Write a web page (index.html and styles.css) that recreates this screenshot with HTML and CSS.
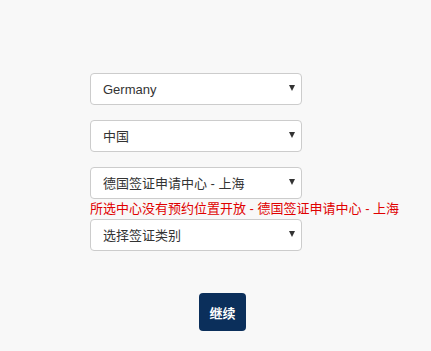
FILE: index.html
```html
<!DOCTYPE html>
<html lang="zh">
<head>
    <meta charset="UTF-8">
    <meta name="viewport" content="width=device-width, initial-scale=1.0">
    <title>预约</title>
    <link rel="stylesheet" href="styles.css">
</head>
<body>
    <div class="form">
        <div class="field">
            <select class="picker">
                <option>Germany</option>
            </select>
            <span class="arrow"></span>
        </div>
        <div class="field">
            <select class="picker">
                <option>中国</option>
            </select>
            <span class="arrow"></span>
        </div>
        <div class="field tight">
            <select class="picker">
                <option>德国签证申请中心 - 上海</option>
            </select>
            <span class="arrow"></span>
        </div>
        <p class="error">所选中心没有预约位置开放 - 德国签证申请中心 - 上海</p>
        <div class="field">
            <select class="picker">
                <option>选择签证类别</option>
            </select>
            <span class="arrow"></span>
        </div>
        <div class="actions">
            <button class="next">继续</button>
        </div>
    </div>
</body>
</html>
```

FILE: styles.css
```css
body {
    margin: 0;
    background-color: #f8f8f8;
    font-family: "Liberation Sans", Arial, "Noto Sans CJK SC", sans-serif;
    color: #333;
}
.form {
    width: 212px;
    padding: 73px 0 0 90px;
}
.field {
    position: relative;
    margin-bottom: 15px;
}
.field.tight {
    margin-bottom: 0;
}
.picker {
    display: block;
    width: 212px;
    height: 32px;
    padding: 0 24px 0 12px;
    font-family: inherit;
    font-size: 13px;
    color: #333;
    background-color: #fff;
    border: 1px solid #ccc;
    border-radius: 4px;
    appearance: none;
    -webkit-appearance: none;
    outline: none;
}
.arrow {
    position: absolute;
    right: 7px;
    top: 12px;
    width: 0;
    height: 0;
    border-left: 3.5px solid transparent;
    border-right: 3.5px solid transparent;
    border-top: 6px solid #333;
    pointer-events: none;
}
.error {
    margin: 3px 0 3px;
    width: 340px;
    font-size: 13px;
    line-height: 14px;
    color: #e00000;
    white-space: nowrap;
}
.actions {
    display: flex;
    justify-content: center;
    width: 265px;
    padding-top: 27px;
}
.next {
    padding: 0 10px;
    height: 38px;
    font-family: inherit;
    font-size: 13px;
    font-weight: bold;
    color: #fff;
    background-color: #0b2f5b;
    border: none;
    border-radius: 4px;
}
```
